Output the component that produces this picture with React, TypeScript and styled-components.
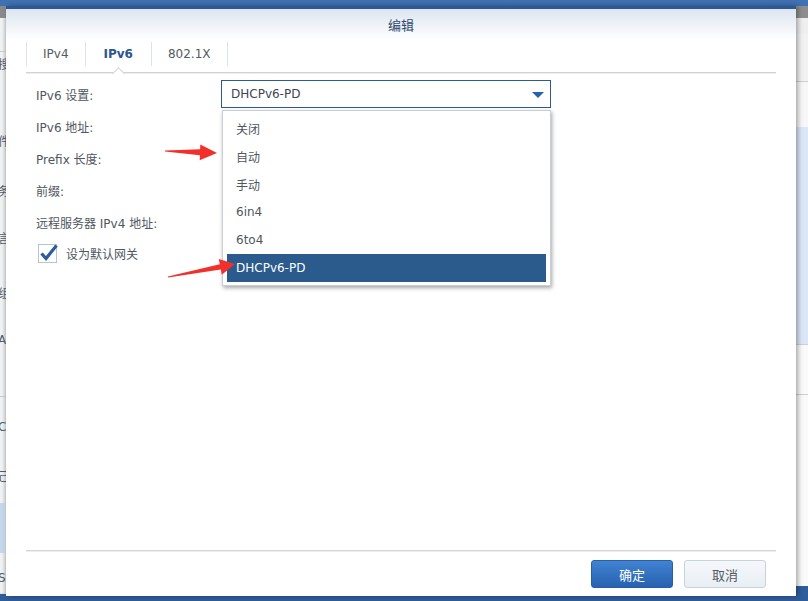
import styled, { createGlobalStyle } from 'styled-components'

const GlobalStyle = createGlobalStyle`
  html, body {
    margin: 0;
    padding: 0;
    background: #3c6cae;
  }
  * {
    box-sizing: border-box;
  }
`

const FONT = `"DejaVu Sans", "Noto Sans CJK SC", sans-serif`

const sideItems: { t?: string; h: number; sel?: boolean; line?: boolean; dark?: boolean }[] = [
  { h: 12, dark: true },
  { h: 34, line: true },
  { t: '搜', h: 22 },
  { h: 48 },
  { t: '件', h: 36 },
  { h: 16 },
  { t: '务', h: 32 },
  { h: 16 },
  { t: '言', h: 30 },
  { h: 24 },
  { t: '组', h: 32 },
  { h: 16 },
  { t: 'AF', h: 32 },
  { h: 41, line: true },
  { h: 14 },
  { t: 'Co', h: 32 },
  { h: 16 },
  { t: '己', h: 32 },
  { h: 12 },
  { h: 50, sel: true },
  { h: 9 },
  { t: 'S', h: 32 },
]

const options = ['关闭', '自动', '手动', '6in4', '6to4', 'DHCPv6-PD']
const selected = 'DHCPv6-PD'

const fields = ['IPv6 设置:', 'IPv6 地址:', 'Prefix 长度:', '前缀:', '远程服务器 IPv4 地址:']

function arrowPoints(x1: number, y1: number, x2: number, y2: number, head = 16, hw = 8, sw = 3) {
  const dx = x2 - x1
  const dy = y2 - y1
  const len = Math.hypot(dx, dy)
  const ux = dx / len
  const uy = dy / len
  const nx = -uy
  const ny = ux
  const bx = x2 - ux * head
  const by = y2 - uy * head
  const pts = [
    [x1 + nx * 0.6, y1 + ny * 0.6],
    [bx + nx * sw, by + ny * sw],
    [bx + nx * hw, by + ny * hw],
    [x2, y2],
    [bx - nx * hw, by - ny * hw],
    [bx - nx * sw, by - ny * sw],
    [x1 - nx * 0.6, y1 - ny * 0.6],
  ]
  return pts.map((p) => p.map((v) => v.toFixed(1)).join(',')).join(' ')
}

const App = () => {
  return (
    <Root>
      <GlobalStyle />
      <Desktop>
        <SideCol>
          {sideItems.map((it, i) => (
            <SideItem key={i} h={it.h} sel={it.sel} line={it.line} dark={it.dark}>
              {it.t}
            </SideItem>
          ))}
        </SideCol>
        <Spacer />
        <RightCol>
          <RightBand h={12} bg="#8d8d8d" />
          <RightBand h={16} bg="#efefef" />
          <RightBand h={48} bg="#f2f2f2" line />
          <RightBand h={45} bg="#f7f7f7" />
          <RightBand h={218} bg="#dbe7f7" line />
          <RightBand h={50} bg="#fafafa" line />
          <RightBand h={191} bg="#fafafa" />
        </RightCol>
      </Desktop>

      <Dialog>
        <Header>编辑</Header>
        <Body>
          <TabBar>
            <Tab>IPv4</Tab>
            <Tab active>IPv6</Tab>
            <Tab>802.1X</Tab>
          </TabBar>

          <Form>
            {fields.map((f, i) => (
              <Row key={f}>
                <Label>{f}</Label>
                {i === 0 ? (
                  <Select>
                    <span>{selected}</span>
                    <Caret />
                  </Select>
                ) : (
                  <span />
                )}
              </Row>
            ))}
            <CheckRow>
              <CheckBox>
                <svg width="20" height="20" viewBox="0 0 20 20">
                  <path
                    d="M3.5 9.5 L8 14.5 L18.5 1.5"
                    fill="none"
                    stroke="#2b5c9c"
                    strokeWidth="3.2"
                    strokeLinejoin="miter"
                  />
                </svg>
              </CheckBox>
              <CheckLabel>设为默认网关</CheckLabel>
            </CheckRow>

            <Menu>
              {options.map((o) => (
                <MenuItem key={o} active={o === selected}>
                  {o}
                </MenuItem>
              ))}
            </Menu>
          </Form>

          <Footer>
            <Button primary>确定</Button>
            <Button>取消</Button>
          </Footer>
        </Body>
      </Dialog>

      <Marks width="808" height="601" viewBox="0 0 808 601">
        <polygon points={arrowPoints(165, 151, 217, 153, 17, 8, 3)} fill="#f2302b" />
        <polygon points={arrowPoints(168, 277, 235, 264, 15, 8, 2.6)} fill="#f2302b" />
      </Marks>
    </Root>
  )
}

const Root = styled.div`
  position: relative;
  width: 808px;
  height: 601px;
  overflow: hidden;
  background: linear-gradient(#4071b3, #2f5c9b);
  font-family: ${FONT};
`

const Desktop = styled.div`
  display: flex;
  align-items: flex-start;
  padding-top: 6px;
  height: 100%;
`

const SideCol = styled.div`
  width: 6px;
  display: flex;
  flex-direction: column;
  overflow: hidden;
  background: #f1f2f3;
  box-shadow: inset -2px 0 3px rgba(0, 0, 0, 0.15);
`

const SideItem = styled.div<{ h: number; sel?: boolean; line?: boolean; dark?: boolean }>`
  height: ${(p) => p.h}px;
  flex-shrink: 0;
  display: flex;
  align-items: center;
  margin-left: -2px;
  white-space: nowrap;
  font-size: 12px;
  color: #555c66;
  background: ${(p) => (p.dark ? '#8a8a8a' : p.sel ? '#c6d7eb' : 'transparent')};
  border-bottom: ${(p) => (p.line ? '1px solid #c9c9c9' : 'none')};
`

const Spacer = styled.div`
  flex: 1;
`

const RightCol = styled.div`
  width: 12px;
  display: flex;
  flex-direction: column;
  box-shadow: inset 4px 0 4px -2px rgba(0, 0, 0, 0.25);
`

const RightBand = styled.div<{ h: number; bg: string; line?: boolean }>`
  height: ${(p) => p.h}px;
  background: ${(p) => p.bg};
  border-bottom: ${(p) => (p.line ? '1px solid #cfcfcf' : 'none')};
`

const Dialog = styled.div`
  position: absolute;
  left: 6px;
  top: 6px;
  width: 790px;
  height: 590px;
  background: #fff;
  border-top: 3px solid #2c5993;
  box-shadow: 2px 0 5px rgba(0, 0, 0, 0.35);
  display: flex;
  flex-direction: column;
`

const Header = styled.div`
  height: 31px;
  flex-shrink: 0;
  display: flex;
  align-items: center;
  justify-content: center;
  padding-bottom: 1px;
  background: linear-gradient(#dce5ef, #ffffff);
  color: #2e4a70;
  font-size: 13px;
`

const Body = styled.div`
  flex: 1;
  display: flex;
  flex-direction: column;
  padding: 0 20px;
`

const TabBar = styled.div`
  height: 33px;
  flex-shrink: 0;
  display: flex;
  align-items: flex-start;
  padding-top: 2px;
  border-bottom: 1px solid #d2d2d2;
  box-shadow: 0 1px 0 #efefef;
`

const Tab = styled.div<{ active?: boolean }>`
  position: relative;
  height: 24px;
  display: flex;
  align-items: center;
  padding: 0 ${(p) => (p.active ? 18 : 16)}px;
  font-size: 12px;
  font-weight: ${(p) => (p.active ? 'bold' : 'normal')};
  color: ${(p) => (p.active ? '#2b5790' : '#545b63')};
  border-right: 1px solid #dde3ea;
  &:first-child {
    border-left: 1px solid #dde3ea;
  }
  &::after {
    content: '';
    display: ${(p) => (p.active ? 'block' : 'none')};
    position: absolute;
    width: 8px;
    height: 8px;
    left: calc(50% - 4px);
    top: 27px;
    background: #fff;
    border-left: 1px solid #d2d2d2;
    border-top: 1px solid #d2d2d2;
    transform: rotate(45deg);
  }
`

const Form = styled.div`
  position: relative;
  flex: 1;
  padding: 5px 0 0 10px;
  display: flex;
  flex-direction: column;
`

const Row = styled.div`
  height: 32px;
  display: grid;
  grid-template-columns: 185px 330px;
  align-items: center;
`

const Label = styled.div`
  font-size: 12px;
  color: #4e5660;
  white-space: nowrap;
`

const Select = styled.div`
  height: 28px;
  border: 1px solid #2d5a93;
  display: flex;
  align-items: center;
  justify-content: space-between;
  padding: 0 6px 0 9px;
  font-size: 12px;
  color: #3e4650;
  background: #fff;
`

const Caret = styled.div`
  width: 0;
  height: 0;
  border-left: 6px solid transparent;
  border-right: 6px solid transparent;
  border-top: 6px solid #2563b1;
  margin-top: 2px;
`

const CheckRow = styled.div`
  height: 31px;
  display: flex;
  align-items: center;
  padding-left: 2px;
  gap: 9px;
`

const CheckBox = styled.div`
  width: 19px;
  height: 19px;
  border: 1px solid #b7c4d4;
  background: #fff;
  position: relative;
  svg {
    position: absolute;
    left: -1px;
    top: -1px;
    overflow: visible;
  }
`

const CheckLabel = styled.span`
  font-size: 12px;
  color: #4e5660;
`

const Menu = styled.div`
  position: absolute;
  top: 37px;
  left: 196px;
  width: 329px;
  height: 176px;
  padding: 3px 4px;
  background: #fff;
  border: 1px solid #c6ced7;
  box-shadow: 1px 2px 4px rgba(0, 0, 0, 0.35);
  display: flex;
  flex-direction: column;
`

const MenuItem = styled.div<{ active?: boolean }>`
  height: 28px;
  flex-shrink: 0;
  display: flex;
  align-items: center;
  padding-left: 9px;
  font-size: 12px;
  color: ${(p) => (p.active ? '#ffffff' : '#4e5660')};
  background: ${(p) => (p.active ? '#2b5a8d' : 'transparent')};
`

const Footer = styled.div`
  height: 46px;
  flex-shrink: 0;
  display: flex;
  justify-content: flex-end;
  align-items: flex-start;
  gap: 11px;
  padding: 9px 10px 0 0;
  border-top: 1px solid #d6d6d6;
  box-shadow: inset 0 1px 0 #eeeeee;
`

const Button = styled.button<{ primary?: boolean }>`
  width: 82px;
  height: 28px;
  border-radius: 3px;
  font-family: ${FONT};
  font-size: 13px;
  cursor: pointer;
  color: ${(p) => (p.primary ? '#ffffff' : '#555b62')};
  border: 1px solid ${(p) => (p.primary ? '#2a5fa6' : '#c8d2dd')};
  background: ${(p) =>
    p.primary ? 'linear-gradient(#4083d2, #2762af)' : 'linear-gradient(#f5f8fb, #e8eef4)'};
`

const Marks = styled.svg`
  position: absolute;
  left: 0;
  top: 0;
  pointer-events: none;
`

export default App
